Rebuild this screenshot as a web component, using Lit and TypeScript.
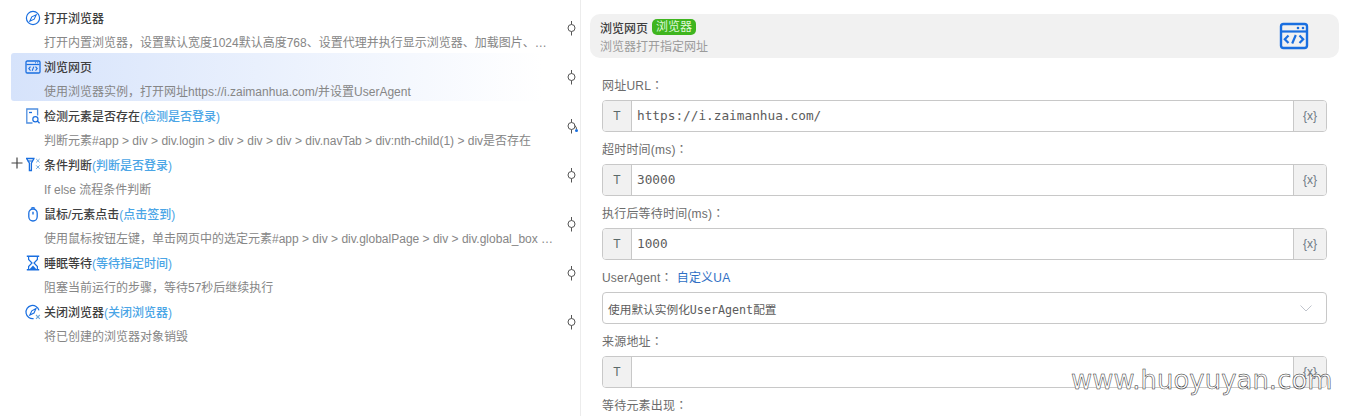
import { LitElement, html, css, svg } from "lit";
import { customElement } from "lit/decorators.js";

const B = "#1a6fe0";
const icons: Record<string, unknown> = {
  compass: svg`<circle cx="8" cy="8" r="6.6" fill="none" stroke="${B}" stroke-width="1.2"/><path d="M11.2 4.8 L9.2 9.2 L4.8 11.2 L6.8 6.8 Z" fill="none" stroke="${B}" stroke-width="1.1"/>`,
  web: svg`<rect x="1" y="2" width="14" height="12" rx="1.2" fill="none" stroke="${B}" stroke-width="1.3"/><path d="M1.5 5.5H14.5" stroke="${B}" stroke-width="1.2"/><path d="M10 3.8H11M12.2 3.8H13.2" stroke="${B}" stroke-width="1"/><path d="M5.5 7.6L3.8 9.6L5.5 11.6M10.5 7.6L12.2 9.6L10.5 11.6M8.8 7.6L7.2 11.8" fill="none" stroke="${B}" stroke-width="1.1"/>`,
  find: svg`<path d="M7.5 15H1.8V1H12.6V7.5" fill="none" stroke="#4f8fe0" stroke-width="1.3"/><path d="M4 4.5H7" stroke="${B}" stroke-width="1.3"/><circle cx="10.4" cy="11.2" r="2.6" fill="none" stroke="${B}" stroke-width="1.2"/><path d="M12.3 13.1L14.6 15.2" stroke="${B}" stroke-width="1.3"/>`,
  cond: svg`<path d="M1 1.5H9.6M1.6 1.5L4.4 6.2V13.5H6.4V6.2L9 1.5" fill="none" stroke="${B}" stroke-width="1.3"/><path d="M2.6 4H8" stroke="${B}" stroke-width="1.1"/><path d="M11.2 2L14.6 5.4M14.6 2L11.2 5.4M11.2 8.4L14.6 11.8M14.6 8.4L11.2 11.8" stroke="#6fa8dc" stroke-width="1"/>`,
  mouse: svg`<rect x="3.8" y="3" width="8.4" height="12" rx="4.2" fill="none" stroke="${B}" stroke-width="1.3"/><path d="M8 5.8V8.6" stroke="${B}" stroke-width="1.4"/><path d="M6 2.4Q8 0.8 10 2.4" fill="none" stroke="${B}" stroke-width="1.2"/>`,
  sleep: svg`<path d="M1.8 1.2H14.2M1.8 14.8H14.2" stroke="${B}" stroke-width="1.5"/><path d="M3.6 1.5V4.5L7 8L3.6 11.5V14.5M12.4 1.5V4.5L9 8L12.4 11.5V14.5" fill="none" stroke="${B}" stroke-width="1.2"/><path d="M4.8 14L8 10.6L11.2 14Z" fill="${B}"/>`,
  close: svg`<path d="M14 6.4A6.6 6.6 0 1 0 8.6 14.6" fill="none" stroke="${B}" stroke-width="1.2"/><path d="M11 4.6L9 9L4.8 11L6.8 6.8Z" fill="none" stroke="${B}" stroke-width="1.1"/><path d="M11 11L14.8 14.8M14.8 11L11 14.8" stroke="#6fa8dc" stroke-width="1.1"/>`,
};

const rows = [
  { icon: "compass", t: "打开浏览器", n: "", d: "打开内置浏览器，设置默认宽度1024默认高度768、设置代理并执行显示浏览器、加载图片、…" },
  { icon: "web", t: "浏览网页", n: "", d: "使用浏览器实例，打开网址https://i.zaimanhua.com/并设置UserAgent", active: true },
  { icon: "find", t: "检测元素是否存在", n: "(检测是否登录)", d: "判断元素#app > div > div.login > div > div > div > div.navTab > div:nth-child(1) > div是否存在", branch: true },
  { icon: "cond", t: "条件判断", n: "(判断是否登录)", d: "If else 流程条件判断", plus: true },
  { icon: "mouse", t: "鼠标/元素点击", n: "(点击签到)", d: "使用鼠标按钮左键，单击网页中的选定元素#app > div > div.globalPage > div > div.global_box …" },
  { icon: "sleep", t: "睡眠等待", n: "(等待指定时间)", d: "阻塞当前运行的步骤，等待57秒后继续执行" },
  { icon: "close", t: "关闭浏览器", n: "(关闭浏览器)", d: "将已创建的浏览器对象销毁" },
];

@customElement("app-root")
export class AppRoot extends LitElement {
  static styles = css`
    :host { display: block; width: 1345px; height: 416px; overflow: hidden; position: relative; background: #fff;
      font-family: "Liberation Sans", "Noto Sans CJK SC", sans-serif; font-size: 12px; color: #606266; }
    .page { display: flex; height: 416px; }
    .left { width: 581px; box-sizing: border-box; border-right: 1px solid #ececec; padding-top: 4px; flex: none; }
    .row { display: flex; height: 49px; align-items: stretch; }
    .main { flex: 1; min-width: 0; margin-left: 11px; padding-left: 14px; height: 48px; border-radius: 3px; }
    .row.active .main { background: linear-gradient(90deg, #d6e3fb 0%, #fff 96%); }
    .line1 { display: flex; align-items: center; height: 28px; margin-top: -1px; position: relative; }
    .ic { width: 16px; height: 16px; margin: 2px 3px 0 0; flex: none; }
    .t { font-weight: 500; color: #3f3f3f; }
    .n { font-weight: 500; color: #4aa5e6; }
    .plus { position: absolute; left: -14px; top: 7px; width: 12px; height: 12px; }
    .d { padding-left: 19px; margin-top: 4px; line-height: 16px; color: #868686; white-space: nowrap; overflow: hidden; width: 512px; }
    .h { width: 16px; flex: none; align-self: flex-start; margin-top: 12px; height: 24px; }
    .right { flex: 1; padding: 14px 6px 0 9px; min-width: 0; }
    .head { height: 44px; background: #f1f1f1; border-radius: 10px; display: flex; align-items: center; padding: 0 29px 0 10px; box-sizing: border-box; }
    .hl { flex: 1; }
    .ht { display: flex; align-items: center; height: 20px; font-weight: 500; color: #3f3f3f; }
    .tag { margin-left: 4px; background: #3fb51f; color: #dff8d8; border-radius: 5px; height: 16px; line-height: 16px; padding: 0 4px; font-weight: 400; }
    .hd { color: #9b9b9b; line-height: 16px; margin-top: 2px; }
    .form { padding: 0 12px 0 12px; }
    .lab { height: 16px; line-height: 16px; margin-top: 9px; margin-bottom: 7px; color: #6c6c6c; white-space: nowrap; letter-spacing: .2px; }
    .form > .lab:first-child { margin-top: 19px; }
    .colon { font-family: "Noto Sans CJK TC", sans-serif; }
    .lab a { color: #2f6fc4; margin-left: 4px; }
    .inp { height: 32px; box-sizing: border-box; border: 1px solid #c8c8c8; border-radius: 4px; display: flex; align-items: stretch; overflow: hidden; }
    .pre { width: 28px; background: #f1f1f1; border-right: 1px solid #c8c8c8; display: flex; align-items: center; justify-content: center; color: #5b6a6a; flex: none; }
    .val { flex: 1; padding-left: 5px; font-family: "DejaVu Sans Mono", "Noto Sans CJK SC", monospace; font-size: 12.75px; color: #5c5c5c; line-height: 29px; }
    .suf { width: 32px; background: #f1f1f1; border-left: 1px solid #c8c8c8; display: flex; align-items: center; justify-content: center; color: #6f7a85; font-family: "Liberation Sans", sans-serif; font-size: 12px; flex: none; }
    .sel { padding: 0 14px 0 5px; align-items: center; font-family: "DejaVu Sans Mono", "Noto Sans CJK SC", monospace; font-size: 11.7px; color: #5c5c5c; justify-content: space-between; }
    .bigic { width: 32px; height: 32px; }
    .wm { position: absolute; left: 1071px; top: 365px; font-family: "DejaVu Sans", sans-serif; font-size: 25.8px; letter-spacing: .1px; color: #fff;
      -webkit-text-stroke: 0.5px #2a2a2a; white-space: nowrap; line-height: 30px; }
  `;

  label(text: string) {
    return html`<div class="lab">${text}<span class="colon">：</span></div>`;
  }

  field(label: string, value: string) {
    return html`${this.label(label)}
      <div class="inp"><div class="pre">T</div><div class="val">${value}</div><div class="suf">{x}</div></div>`;
  }

  render() {
    return html`<div class="page">
      <div class="left">
        ${rows.map((r) => html`<div class="row ${r.active ? "active" : ""}">
          <div class="main">
            <div class="line1">
              ${r.plus ? html`<svg class="plus" viewBox="0 0 12 12"><path d="M0.5 6H11.5M6 0.5V11.5" stroke="#444" stroke-width="1.2"/></svg>` : ""}
              <svg class="ic" viewBox="0 0 16 16">${icons[r.icon]}</svg>
              <span class="t">${r.t}</span><span class="n">${r.n}</span>
            </div>
            <div class="d">${r.d}</div>
          </div>
          <svg class="h" viewBox="0 0 16 24">
            <path d="M7.5 5V8.5M7.5 15.5V19.5" stroke="#555" stroke-width="1"/>
            <circle cx="7.5" cy="12" r="3.5" fill="none" stroke="#555" stroke-width="1"/>
            ${r.branch ? svg`<path d="M10.5 11.5Q12.5 12.5 12.5 15" fill="none" stroke="#555"/><circle cx="12.5" cy="16.5" r="1.5" fill="${B}"/>` : ""}
          </svg>
        </div>`)}
      </div>
      <div class="right">
        <div class="head">
          <div class="hl">
            <div class="ht">浏览网页<span class="tag">浏览器</span></div>
            <div class="hd">浏览器打开指定网址</div>
          </div>
          <svg class="bigic" viewBox="0 0 32 32">
            <rect x="3" y="4" width="26" height="24" rx="2.5" fill="none" stroke="${B}" stroke-width="2.4"/>
            <path d="M3 11.5H29" stroke="${B}" stroke-width="2.2"/>
            <circle cx="20" cy="8" r="1.3" fill="${B}"/><circle cx="25" cy="8" r="1.3" fill="${B}"/>
            <path d="M10.5 15.5L6.8 19.2L10.5 23M21.5 15.5L25.2 19.2L21.5 23M17.8 15L14.2 23.5" fill="none" stroke="${B}" stroke-width="2.2"/>
          </svg>
        </div>
        <div class="form">
          ${this.field("网址URL", "https://i.zaimanhua.com/")}
          ${this.field("超时时间(ms)", "30000")}
          ${this.field("执行后等待时间(ms)", "1000")}
          <div class="lab">UserAgent<span class="colon">：</span><a>自定义UA</a></div>
          <div class="inp sel"><span>使用默认实例化UserAgent配置</span>
            <svg width="12" height="7" viewBox="0 0 12 7"><path d="M0.5 0.5L6 6L11.5 0.5" fill="none" stroke="#c0c4cc"/></svg>
          </div>
          ${this.field("来源地址", "")}
          ${this.label("等待元素出现")}
        </div>
      </div>
    </div>
    <div class="wm">www.huoyuyan.com</div>`;
  }
}
